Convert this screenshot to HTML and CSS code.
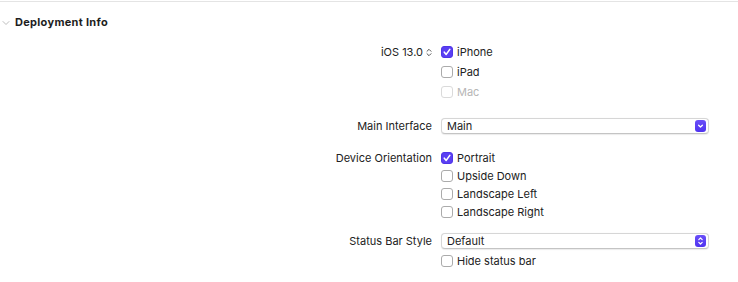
FILE: index.html
```html
<!DOCTYPE html>
<html>
<head>
<meta charset="utf-8">
<link rel="stylesheet" href="styles.css">
</head>
<body>
<div class="panel">
  <div class="header">
    <svg class="disclosure" width="8" height="6" viewBox="0 0 8 6"><path d="M1 1.5 L4 4.5 L7 1.5" fill="none" stroke="#bdbdbd" stroke-width="1" stroke-linecap="round" stroke-linejoin="round"/></svg>
    <span class="title">Deployment Info</span>
  </div>

  <div class="form">
    <div class="row group-ios">
      <div class="label">iOS 13.0<svg class="stepper" width="6" height="9" viewBox="0 0 6 9"><path d="M1 3.3 L3 1.3 L5 3.3 M1 5.7 L3 7.7 L5 5.7" fill="none" stroke="#555" stroke-width="1" stroke-linecap="round" stroke-linejoin="round"/></svg></div>
      <div class="controls rows20">
        <label class="check"><span class="box checked"><svg width="10" height="10" viewBox="0 0 10 10"><path d="M2.3 5.2 L4.2 7.4 L7.8 2.4" fill="none" stroke="#fff" stroke-width="1.6" stroke-linecap="round" stroke-linejoin="round"/></svg></span>iPhone</label>
        <label class="check"><span class="box"></span>iPad</label>
        <label class="check disabled"><span class="box"></span>Mac</label>
      </div>
    </div>

    <div class="row group-main">
      <div class="label">Main Interface</div>
      <div class="controls">
        <div class="popup"><span>Main</span><span class="popbtn"><svg width="11" height="12" viewBox="0 0 11 12"><path d="M3.6 5.2 L5.5 7 L7.4 5.2" fill="none" stroke="#fff" stroke-width="1.3" stroke-linecap="round" stroke-linejoin="round"/></svg></span></div>
      </div>
    </div>

    <div class="row group-orient">
      <div class="label">Device Orientation</div>
      <div class="controls rows18">
        <label class="check"><span class="box checked"><svg width="10" height="10" viewBox="0 0 10 10"><path d="M2.3 5.2 L4.2 7.4 L7.8 2.4" fill="none" stroke="#fff" stroke-width="1.6" stroke-linecap="round" stroke-linejoin="round"/></svg></span>Portrait</label>
        <label class="check"><span class="box"></span>Upside Down</label>
        <label class="check"><span class="box"></span>Landscape Left</label>
        <label class="check"><span class="box"></span>Landscape Right</label>
      </div>
    </div>

    <div class="row group-status">
      <div class="label">Status Bar Style</div>
      <div class="controls">
        <div class="popup"><span>Default</span><span class="popbtn"><svg width="11" height="12" viewBox="0 0 11 12"><path d="M3.8 4.6 L5.5 3 L7.2 4.6 M3.8 7.4 L5.5 9 L7.2 7.4" fill="none" stroke="#fff" stroke-width="1.2" stroke-linecap="round" stroke-linejoin="round"/></svg></span></div>
        <label class="check hide"><span class="box"></span>Hide status bar</label>
      </div>
    </div>
  </div>
</div>
</body>
</html>
```

FILE: styles.css
```css
html, body {
  margin: 0;
  padding: 0;
  background: #ffffff;
}
body {
  font-family: Inter, "Liberation Sans", Arial, sans-serif;
  font-size: 11px;
  color: #222222;
  width: 738px;
  height: 282px;
  overflow: hidden;
}
.panel {
  padding-top: 1px;
}
.header {
  border-top: 1px solid #e4e4e4;
  height: 41px;
  display: flex;
  align-items: center;
  padding-left: 2px;
  box-sizing: border-box;
}
.disclosure {
  margin-right: 5px;
  margin-top: 1px;
}
.title {
  font-weight: 700;
  font-size: 11px;
  letter-spacing: 0.3px;
  color: #1e1e1e;
}
.form {
  display: flex;
  flex-direction: column;
  padding-right: 29px;
}
.row {
  display: grid;
  grid-template-columns: 432px 1fr;
  column-gap: 9px;
}
.label {
  text-align: right;
  display: flex;
  justify-content: flex-end;
  align-items: center;
  height: 20px;
  white-space: nowrap;
}
.stepper {
  margin-left: 3px;
  margin-right: -9px;
}
.group-ios .label {
  padding-right: 9px;
}
.controls {
  display: flex;
  flex-direction: column;
}
.check {
  display: flex;
  align-items: center;
  gap: 4px;
  white-space: nowrap;
}
.rows20 .check { height: 20px; }
.rows18 .check { height: 18px; }
.group-orient .label { height: 18px; }
.box {
  width: 12px;
  height: 12px;
  box-sizing: border-box;
  border: 1px solid #ababab;
  border-radius: 3px;
  background: #fff;
  display: flex;
  align-items: center;
  justify-content: center;
  flex: none;
}
.box.checked {
  background: #5a3ff3;
  border-color: #4f35e8;
}
.check.disabled {
  color: #b6b6b6;
}
.check.disabled .box {
  border-color: #dadada;
}
.group-main {
  margin-top: 15px;
}
.group-main .label,
.group-status .label {
  height: 18px;
}
.popup {
  height: 16px;
  margin-top: 1px;
  box-sizing: border-box;
  border: 1px solid #d6d6d6;
  border-bottom-color: #c4c4c4;
  border-radius: 4px;
  background: #fff;
  box-shadow: 0 0.5px 1px rgba(0,0,0,0.08);
  display: flex;
  align-items: center;
  justify-content: space-between;
  padding-left: 5px;
  padding-right: 2px;
}
.popbtn {
  width: 11px;
  height: 12px;
  border-radius: 3px;
  background: linear-gradient(#6a4ff8, #4f33f0);
  display: flex;
}
.group-orient {
  margin-top: 14px;
}
.group-status {
  margin-top: 11px;
}
.check.hide {
  height: 18px;
  margin-top: 3px;
}
```
